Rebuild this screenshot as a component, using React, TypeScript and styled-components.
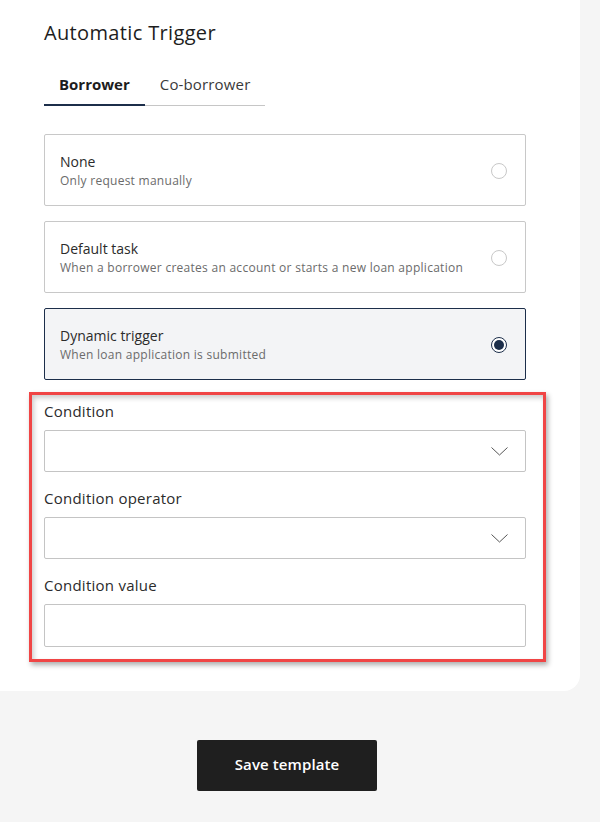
import styled, { createGlobalStyle } from 'styled-components';

const GlobalStyle = createGlobalStyle`
  * {
    box-sizing: border-box;
  }
  body {
    margin: 0;
    background: #f5f5f5;
    font-family: 'Open Sans', 'Noto Sans', sans-serif;
    color: #1f1f1f;
  }
`;

const Page = styled.div`
  width: 600px;
  min-height: 822px;
  background: #f5f5f5;
`;

const Card = styled.section`
  width: 580px;
  background: #ffffff;
  border-bottom-right-radius: 16px;
  padding: 19px 54px 29px 44px;
`;

const Title = styled.h2`
  margin: 0 0 17px;
  font-size: 20px;
  line-height: 28px;
  font-weight: 500;
  letter-spacing: 0.35px;
  color: #1d1d1d;
`;

const TabList = styled.div`
  display: inline-flex;
  box-shadow: inset 0 -1px 0 #c6c6c6;
  margin-bottom: 28px;
`;

const Tab = styled.button<{ $active?: boolean }>`
  border: none;
  background: none;
  padding: 10px 15px;
  font-family: inherit;
  font-size: 15px;
  line-height: 20px;
  font-weight: ${({ $active }) => ($active ? 700 : 400)};
  letter-spacing: ${({ $active }) => ($active ? '0' : '0.15px')};
  color: ${({ $active }) => ($active ? '#1d1d1d' : '#3a3a3a')};
  border-bottom: 2px solid ${({ $active }) => ($active ? '#1c2e4a' : 'transparent')};
  cursor: pointer;
`;

const OptionList = styled.div`
  display: flex;
  flex-direction: column;
  gap: 15px;
`;

const Option = styled.label<{ $selected?: boolean }>`
  display: flex;
  align-items: center;
  justify-content: space-between;
  min-height: 72px;
  padding: 17px 18px 16px 15px;
  border: 1px solid ${({ $selected }) => ($selected ? '#1c2e4a' : '#c8c8c8')};
  border-radius: 2px;
  background: ${({ $selected }) => ($selected ? '#f3f4f6' : '#ffffff')};
  cursor: pointer;
`;

const OptionText = styled.div`
  display: flex;
  flex-direction: column;
`;

const OptionTitle = styled.span`
  font-size: 14px;
  line-height: 20px;
  color: #2b2b2b;
`;

const OptionHint = styled.span`
  font-size: 12px;
  line-height: 17px;
  letter-spacing: 0.27px;
  color: #6b6b6b;
`;

const Radio = styled.span<{ $checked?: boolean }>`
  flex-shrink: 0;
  display: flex;
  align-items: center;
  justify-content: center;
  width: 16px;
  height: 16px;
  border-radius: 50%;
  border: ${({ $checked }) => ($checked ? '1.5px solid #1c2e4a' : '1px solid #c8c8c8')};
  background: #ffffff;

  &::after {
    content: '';
    display: ${({ $checked }) => ($checked ? 'block' : 'none')};
    width: 10px;
    height: 10px;
    border-radius: 50%;
    background: #1c2e4a;
  }
`;

const Highlight = styled.div`
  margin: 12px -20px 0 -15px;
  padding: 6px 17px 12px 12px;
  border: 3px solid #f04545;
  box-shadow: 2px 3px 5px rgba(0, 0, 0, 0.32), inset 2px 3px 5px rgba(0, 0, 0, 0.2);
`;

const Field = styled.div`
  display: flex;
  flex-direction: column;
  gap: 9px;

  & + & {
    margin-top: 16px;
  }
`;

const Label = styled.label`
  font-size: 15px;
  line-height: 20px;
  letter-spacing: 0.25px;
  color: #2b2b2b;
`;

const SelectBox = styled.div`
  display: flex;
  align-items: center;
  justify-content: flex-end;
  height: 42px;
  padding-right: 17px;
  border: 1px solid #c4c4c4;
  border-radius: 2px;
  background: #ffffff;
`;

const TextInput = styled.input`
  height: 43px;
  padding: 0 12px;
  border: 1px solid #c4c4c4;
  border-radius: 2px;
  font-family: inherit;
  font-size: 14px;
  outline: none;
`;

const Footer = styled.div`
  display: flex;
  padding: 49px 0 0 197px;
`;

const SaveButton = styled.button`
  width: 180px;
  height: 51px;
  padding: 0 0 3px;
  border: none;
  border-radius: 2px;
  background: #1f1f1f;
  color: #ffffff;
  font-family: inherit;
  font-size: 15px;
  font-weight: 600;
  letter-spacing: 0.1px;
  cursor: pointer;
`;

const Chevron = () => (
  <svg width="17" height="9" viewBox="0 0 17 9" fill="none">
    <polyline points="0.5,0.5 8.5,8 16.5,0.5" stroke="#555555" strokeWidth="1" />
  </svg>
);

const options = [
  { title: 'None', hint: 'Only request manually' },
  { title: 'Default task', hint: 'When a borrower creates an account or starts a new loan application' },
  { title: 'Dynamic trigger', hint: 'When loan application is submitted' },
];

export default function App() {
  const selected = 2;

  return (
    <Page>
      <GlobalStyle />
      <Card>
        <Title>Automatic Trigger</Title>
        <TabList>
          <Tab $active>Borrower</Tab>
          <Tab>Co-borrower</Tab>
        </TabList>
        <OptionList>
          {options.map((opt, index) => (
            <Option key={opt.title} $selected={index === selected}>
              <OptionText>
                <OptionTitle>{opt.title}</OptionTitle>
                <OptionHint>{opt.hint}</OptionHint>
              </OptionText>
              <Radio $checked={index === selected} />
            </Option>
          ))}
        </OptionList>
        <Highlight>
          <Field>
            <Label>Condition</Label>
            <SelectBox>
              <Chevron />
            </SelectBox>
          </Field>
          <Field>
            <Label>Condition operator</Label>
            <SelectBox>
              <Chevron />
            </SelectBox>
          </Field>
          <Field>
            <Label>Condition value</Label>
            <TextInput type="text" />
          </Field>
        </Highlight>
      </Card>
      <Footer>
        <SaveButton>Save template</SaveButton>
      </Footer>
    </Page>
  );
}
